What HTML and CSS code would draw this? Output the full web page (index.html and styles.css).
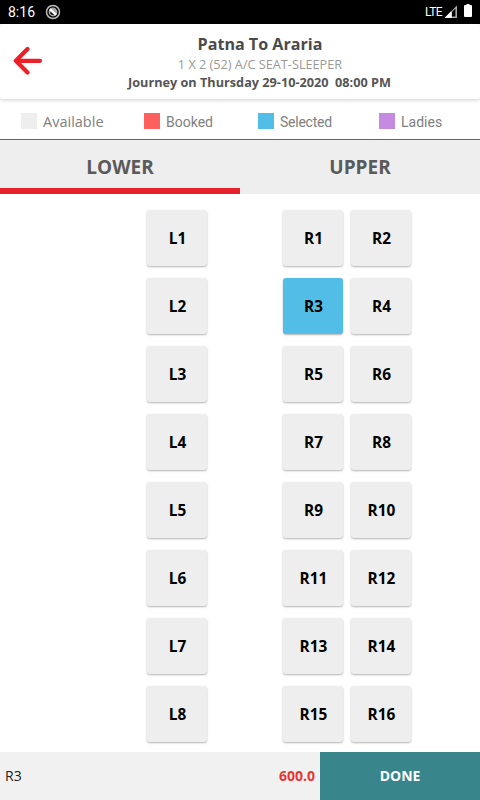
FILE: index.html
```html
<!DOCTYPE html>
<html lang="en">
<head>
  <meta charset="UTF-8" />
  <meta name="viewport" content="width=device-width, initial-scale=1" />
  <title>Patna To Araria</title>
  <link rel="stylesheet" href="styles.css">
</head>
<body>

  <div class="status-bar">
    <span class="clock">8:16</span>
    <svg class="sync" width="16" height="16" viewBox="0 0 16 16">
      <circle cx="8" cy="8" r="6.5" fill="none" stroke="#bbb" stroke-width="1.5" />
      <circle cx="8" cy="8" r="4.4" fill="#aaa" />
      <path d="M5.2 9.5Q6.5 11.5 9.2 10.8L5.5 7.2Z" fill="#111" />
      <path d="M4.8 5.2L11.2 10.8" stroke="#fff" stroke-width="2.2" />
    </svg>
    <span class="network">LTE</span>
    <svg class="signal" width="14" height="14" viewBox="0 0 14 14">
      <path d="M0.5 13L13 0.5V13Z" fill="#aaa" />
      <path d="M0.5 13L7.5 6V13Z" fill="#fff" />
      <path d="M8 7L11.4 3.6V11.6H8Z" fill="#000" />
    </svg>
    <svg class="battery" width="8" height="13" viewBox="0 0 8 13">
      <path d="M2.5 0H5.5V1H7Q8 1 8 2V12Q8 13 7 13H1Q0 13 0 12V2Q0 1 1 1H2.5Z" fill="#fff" />
    </svg>
  </div>

  <header class="header">
    <svg class="back" width="30" height="30" viewBox="0 0 30 30">
      <path d="M14.5 3L2.8 14.8L14.5 26.6M3 14.8H27" fill="none" stroke="#ed2027" stroke-width="4.2" stroke-linecap="round" stroke-linejoin="round" />
    </svg>
    <div class="trip">
      <h1>Patna To Araria</h1>
      <p class="bus-type">1 X 2 (52) A/C SEAT-SLEEPER</p>
      <p class="journey">Journey on Thursday 29-10-2020&nbsp; 08:00 PM</p>
    </div>
  </header>

  <div class="legend">
    <div class="legend-item available"><i></i><span>Available</span></div>
    <div class="legend-item booked"><i></i><span>Booked</span></div>
    <div class="legend-item selected"><i></i><span>Selected</span></div>
    <div class="legend-item ladies"><i></i><span>Ladies</span></div>
  </div>

  <nav class="tabs">
    <div class="tab active">LOWER</div>
    <div class="tab">UPPER</div>
  </nav>

  <main class="seats">
    <button class="seat">L1</button><button class="seat">R1</button><button class="seat">R2</button>
    <button class="seat">L2</button><button class="seat picked">R3</button><button class="seat">R4</button>
    <button class="seat">L3</button><button class="seat">R5</button><button class="seat">R6</button>
    <button class="seat">L4</button><button class="seat">R7</button><button class="seat">R8</button>
    <button class="seat">L5</button><button class="seat">R9</button><button class="seat">R10</button>
    <button class="seat">L6</button><button class="seat">R11</button><button class="seat">R12</button>
    <button class="seat">L7</button><button class="seat">R13</button><button class="seat">R14</button>
    <button class="seat">L8</button><button class="seat">R15</button><button class="seat">R16</button>
  </main>

  <footer class="footer">
    <span class="chosen">R3</span>
    <span class="fare">600.0</span>
    <button class="done">DONE</button>
  </footer>

</body>
</html>
```
FILE: styles.css
```css
* {
  box-sizing: border-box;
}

body {
  margin: 0;
  height: 800px;
  display: flex;
  flex-direction: column;
  overflow: hidden;
  background: #fff;
  font-family: "Open Sans", sans-serif;
}

h1, p {
  margin: 0;
}

button {
  border: none;
  padding: 0;
  font-family: inherit;
}

.status-bar {
  height: 24px;
  flex: none;
  display: flex;
  align-items: center;
  padding: 0 8px;
  background: #000;
  color: #fff;
  font-family: Roboto, sans-serif;
}

.clock {
  width: 37px;
  font-size: 14px;
}

.network {
  margin-left: auto;
  font-size: 12px;
  letter-spacing: -0.6px;
}

.signal {
  margin-left: 2px;
}

.battery {
  margin: -3px 0 0 6px;
}

.header {
  height: 75px;
  flex: none;
  display: flex;
  background: #fff;
  border-radius: 3px;
  box-shadow: 0 1px 4px rgba(0, 0, 0, 0.2);
}

.back {
  margin: 22px 0 0 13px;
}

.trip {
  width: 437px;
  padding-top: 9px;
  padding-right: 4px;
  text-align: center;
  white-space: nowrap;
}

.trip h1 {
  padding-left: 1px;
  font-size: 16.1px;
  line-height: 22px;
  font-weight: 700;
  color: #4a4a4a;
}

.bus-type {
  padding-left: 1px;
  font-size: 12.7px;
  line-height: 18px;
  color: #999;
}

.journey {
  font-size: 12.7px;
  line-height: 18px;
  font-weight: 700;
  color: #555;
}

.legend {
  height: 41px;
  flex: none;
  display: flex;
  padding-top: 14px;
  border-bottom: 1px solid #666;
  font-family: Roboto, sans-serif;
  font-size: 14px;
  line-height: 18px;
  color: #808080;
}

.legend-item {
  display: flex;
  gap: 6px;
}

.legend-item i {
  width: 16px;
  height: 16px;
}

.available {
  width: 123px;
  margin-left: 21px;
  font-family: "Open Sans", sans-serif;
  font-size: 14.5px;
}

.booked {
  width: 114px;
}

.selected {
  width: 121px;
  letter-spacing: -0.25px;
}

.available i { background: #eee; }
.booked i { background: #ff5f5f; }
.selected i { background: #52bee8; }
.ladies i { background: #c58ae2; }

.tabs {
  height: 54px;
  flex: none;
  display: flex;
  background: #eee;
}

.tab {
  flex: 1;
  text-align: center;
  font-size: 19px;
  line-height: 54px;
  font-weight: 700;
  color: #5a5a5a;
}

.tab.active {
  box-shadow: inset 0 -6px #e62129;
}

.seats {
  flex: 1;
  display: grid;
  grid-template-columns: 128px 60px 60px;
  grid-auto-rows: 56px;
  gap: 12px 8px;
  align-content: start;
  padding: 16px 0 0 147px;
}

.seat {
  width: 60px;
  height: 56px;
  padding-left: 1px;
  border-radius: 3px;
  background: #eee;
  box-shadow: 0 1px 2px rgba(0, 0, 0, 0.3);
  color: #000;
  font-size: 15.4px;
  font-weight: 700;
}

.seat.picked {
  background: #52bee8;
}

.footer {
  height: 48px;
  flex: none;
  display: flex;
  align-items: center;
  background: #f1f1f1;
  font-size: 14px;
}

.chosen {
  padding: 0 0 2px 5px;
  color: #222;
}

.fare {
  margin-left: auto;
  padding: 0 5px 2px 0;
  font-weight: 700;
  color: #e53935;
}

.done {
  width: 160px;
  height: 48px;
  padding-bottom: 2px;
  background: #38858c;
  color: #fff;
  font-size: 14px;
  font-weight: 700;
}
```
